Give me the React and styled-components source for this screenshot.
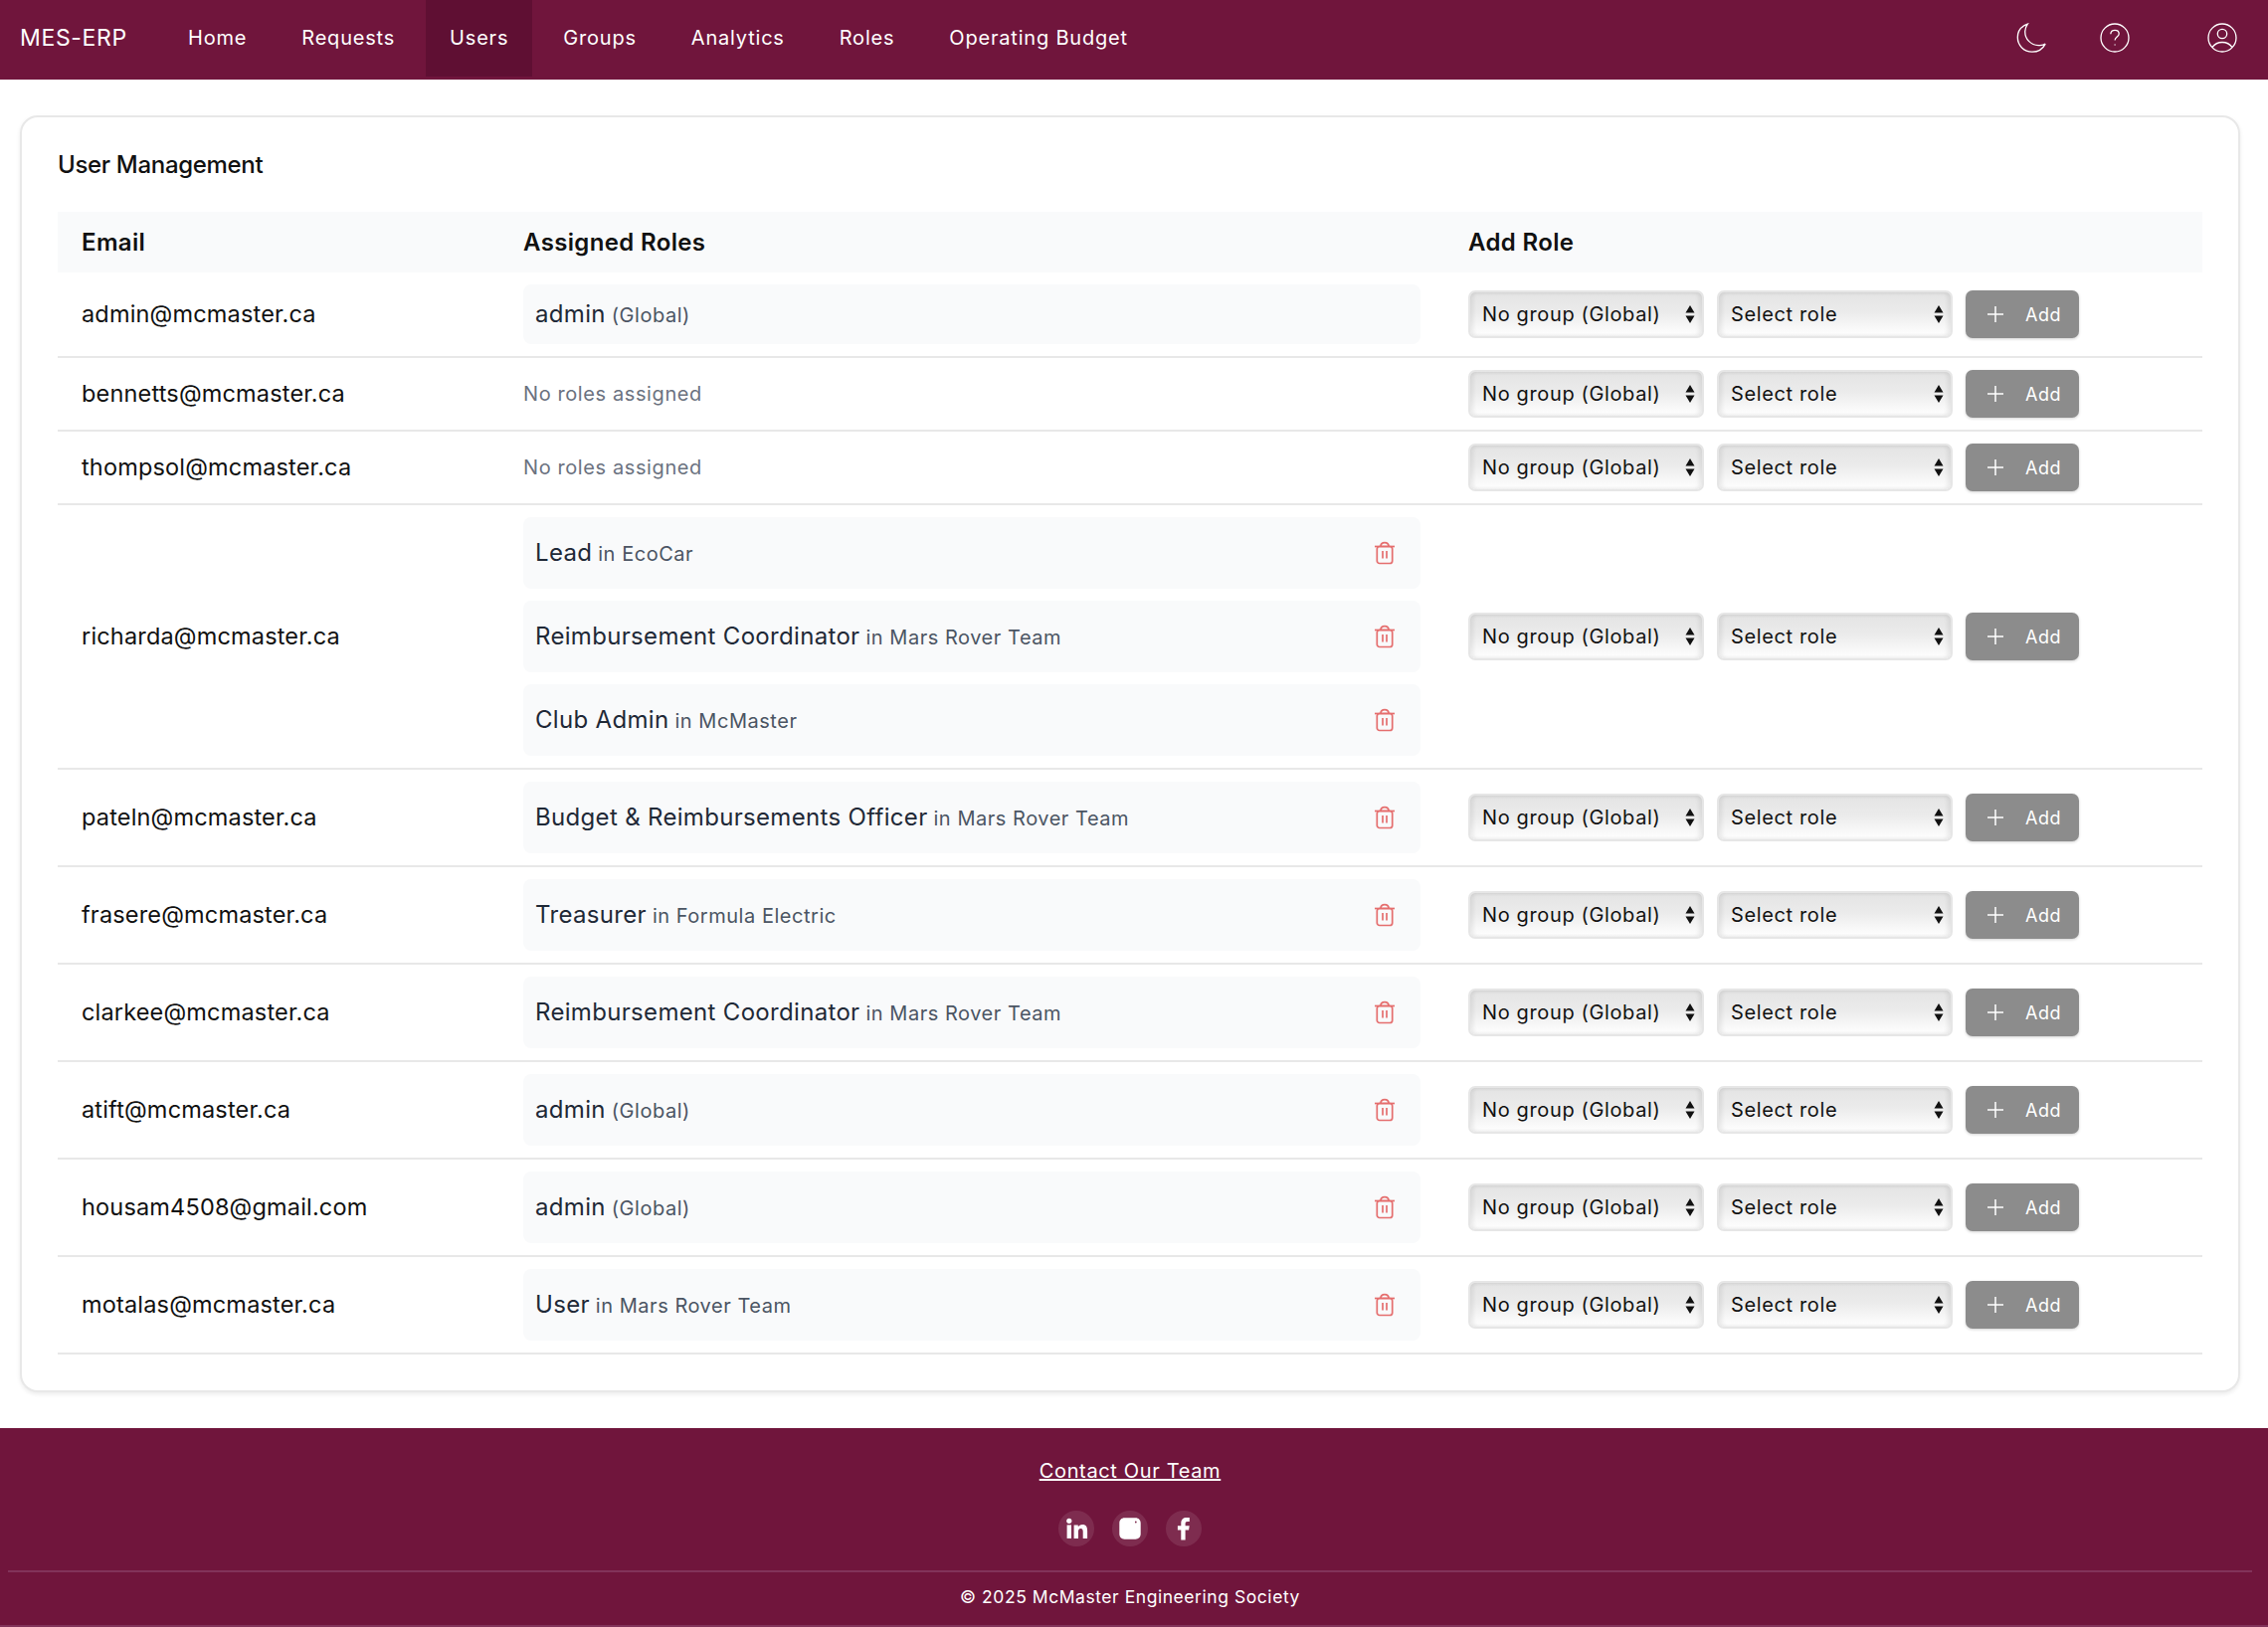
import React from "react";
import styled, { createGlobalStyle } from "styled-components";

const Global = createGlobalStyle`
  html, body { margin: 0; padding: 0; background: #fff; }
  body { font-family: Inter, "Noto Sans", sans-serif; color: #111; -webkit-font-smoothing: antialiased; }
  * { box-sizing: border-box; }
`;

const Page = styled.div`width: 2280px; height: 1636px; display: flex; flex-direction: column; overflow: hidden;`;

const Nav = styled.nav`
  height: 80px; flex: none; background: #70153c; color: #fff; display: flex; align-items: flex-start; padding-left: 20px;
`;
const Brand = styled.div`font-size: 23px; line-height: 76px; letter-spacing: 0.65px; width: 145px; flex: none;`;
const NavItems = styled.div`display: flex; gap: 7px; height: 77px;`;
const NavItem = styled.a`
  padding: 0 24px; font-size: 20px; font-weight: 400; letter-spacing: 0.8px; line-height: 76px; color: #fff;
  background: ${p => (p.$active ? "#5f0f33" : "transparent")};
`;
const NavIcons = styled.div`margin-left: auto; display: flex; align-items: center; height: 76px; padding-right: 31px;`;
const NavIcon = styled.svg`width: 30px; height: 30px; fill: none; stroke: #fff; stroke-width: 1.3; margin-left: ${p => p.$ml}px; display: block;`;

const Main = styled.main`flex: none; padding: 36px 28px 36px 20px; height: 1356px;`;
const Card = styled.section`
  background: #fff; border-radius: 18px; border: 2px solid #e8e8e8; box-shadow: 0 2px 4px rgba(0,0,0,.08);
  padding: 0 36px; height: 1284px;
`;
const Title = styled.h2`margin: 0; font-size: 24px; font-weight: 550; letter-spacing: -0.32px; height: 95px; padding-top: 32px; line-height: 32px; color: #111;`;

const Row = styled.div`
  display: grid; grid-template-columns: 444px 950px 763px; align-items: center;
  border-bottom: 2px solid #e8e8e8;
`;
const HeadRow = styled(Row)`
  background: #f9fafb; border-bottom: 0; height: 61px; font-size: 24px; font-weight: 600; letter-spacing: .35px; color: #111;
`;
const Cell = styled.div`padding: 12px 24px;`;
const Email = styled(Cell)`font-size: 23.500px; letter-spacing: 0.17px; line-height: 28px; color: #111;`;
const RoleCell = styled(Cell)`display: flex; flex-direction: column; gap: 12px;`;
const NoRoles = styled.div`font-size: 20px; letter-spacing: 0.6px; color: #6b7280; `;
const RoleItem = styled.div`
  background: #f9fafb; border-radius: 8px; padding: 0 12px; display: flex; align-items: center; justify-content: space-between;
  height: ${p => (p.$removable ? 72 : 60)}px;
`;
const RoleText = styled.div`font-size: 24px; letter-spacing: 0.32px; line-height: 28px; color: #1f2937;`;
const RoleScope = styled.span`font-size: 20px; letter-spacing: 0.53px; color: #4b5563; margin-left: 6px;`;
const Trash = styled.svg`width: 24px; height: 24px; fill: none; stroke: #e56e6e; stroke-width: 1.7; margin-right: 12px; flex: none;`;

const Controls = styled(Cell)`display: flex; gap: 13px; align-items: center;`;
const SelectWrap = styled.div`position: relative; width: 237px; height: 48px; flex: none;`;
const Select = styled.select`
  appearance: none; width: 100%; height: 100%; margin: 0; padding: 0 30px 0 12px; font-family: inherit; font-size: 20px; letter-spacing: 0.63px; color: #111;
  border: 2px solid #e6e6e6; border-radius: 7px; outline: none;
  background: linear-gradient(#e4e4e4 0%, #ebebeb 45%, #fff 100%);
  box-shadow: inset 3px 0 4px rgba(0,0,0,.07), inset -3px 0 4px rgba(0,0,0,.07);
`;
const Stepper = styled.svg`position: absolute; right: 9px; top: 15px; width: 10px; height: 18px; fill: #111; pointer-events: none;`;
const AddBtn = styled.button`
  width: 114px; height: 48px; flex: none; border: 0; border-radius: 7px; background: #8c8c8c; color: #fff; font-family: inherit;
  font-size: 18px; letter-spacing: 0.5px; display: flex; align-items: center; gap: 21px; padding: 0 0 0 21px; box-shadow: 0 1px 3px rgba(0,0,0,.18);
`;
const Plus = styled.svg`width: 18px; height: 18px; stroke: #fff; stroke-width: 1.5; fill: none; flex: none;`;

const Footer = styled.footer`
  flex: none; height: 200px; background: #70153c; color: #fff; padding: 0 16px 0 8px; border-bottom: 2px solid #82335a; text-align: center;
`;
const Contact = styled.a`display: block; padding-top: 29px; font-size: 20px; line-height: 28px; letter-spacing: .65px; text-decoration: underline; color: #fff;`;
const Socials = styled.div`display: flex; justify-content: center; gap: 18px; margin-top: 26px;`;
const Social = styled.div`width: 36px; height: 36px; border-radius: 50%; background: rgba(255,255,255,.1); display: flex; align-items: center; justify-content: center;`;
const SocialSvg = styled.svg`width: 24px; height: 24px; fill: #fff;`;
const Copy = styled.div`border-top: 2px solid #82335a; margin-top: 24px; padding-top: 12px; font-size: 17.500px; letter-spacing: .55px; line-height: 26px;`;

const MoonIcon = () => (
  <NavIcon $ml={0} viewBox="0 0 30 30"><path d="M11.300 1.200C4.800 3.500 1.300 8.600 1.300 14.600 1.300 23 7.800 29.200 15.900 29.200c5.800 0 10.700-3 13.300-8.100-1.300 1.100-4.600 1.700-7 1.500C14.800 22.400 8.300 16.300 8.800 8.300c.2-2.800 1.200-5.100 2.500-7.100Z"/></NavIcon>
);
const HelpIcon = () => (
  <NavIcon $ml={54} viewBox="0 0 30 30"><circle cx="15" cy="15" r="14"/><path d="M10.800 11.200c.2-2.500 2-3.900 4.300-3.900 2.400 0 4.100 1.500 4.100 3.600 0 3.200-4.100 3.200-4.100 6.700"/><path d="M15.100 21.400v1.100"/></NavIcon>
);
const UserIcon = () => (
  <NavIcon $ml={78} viewBox="0 0 30 30"><circle cx="15" cy="15" r="14"/><circle cx="15" cy="11" r="4.700"/><path d="M5 24.500c2.500-3.500 6-5 10-5s7.500 1.500 10 5"/></NavIcon>
);
const TrashIcon = () => (
  <Trash viewBox="0 0 24 24"><path d="M2 5.500h20"/><path d="M8 5.500C8 3 9.500 1.700 12 1.700S16 3 16 5.500"/><rect x="4.300" y="5.500" width="15.400" height="17" rx="2.500"/><path d="M10 10v7.500M14 10v7.500"/></Trash>
);

const Linkedin = () => (
  <SocialSvg viewBox="0 0 24 24"><circle cx="4.800" cy="4.300" r="2.600"/><rect x="2.600" y="8.400" width="4.400" height="13.500"/><path d="M9.600 8.400h4.200v1.900c.8-1.300 2.300-2.300 4.300-2.300 4 0 5 2.600 5 6.400v7.500h-4.400v-6.700c0-1.800-.4-3.300-2.300-3.300s-2.400 1.500-2.400 3.200v6.800H9.600Z"/></SocialSvg>
);
const Instagram = () => (
  <SocialSvg viewBox="0 0 24 24"><path fillRule="evenodd" d="M6.500 1.300h11c3 0 5.200 2.200 5.200 5.200v11c0 3-2.200 5.200-5.200 5.200h-11c-3 0-5.200-2.200-5.200-5.200v-11c0-3 2.200-5.200 5.200-5.200Zm11.300 3.300a.9.900 0 1 0 0 1.800.9.900 0 0 0 0-1.800Z"/></SocialSvg>
);
const Facebook = () => (
  <SocialSvg viewBox="0 0 24 24"><path d="M9.300 23.600V13.500H5.900V9.200h3.400V6.600C9.300 2.900 11.500.9 14.800.9c1.300 0 2.500.1 3 .2v3.900h-2c-1.800 0-2.200.9-2.200 2.200v2h4.100l-.6 4.300h-3.500v10.100Z"/></SocialSvg>
);

const users = [
  { email: "admin@mcmaster.ca", roles: [{ name: "admin", scope: "(Global)", fixed: true }] },
  { email: "bennetts@mcmaster.ca", roles: [] },
  { email: "thompsol@mcmaster.ca", roles: [] },
  { email: "richarda@mcmaster.ca", roles: [
    { name: "Lead", scope: "in EcoCar" },
    { name: "Reimbursement Coordinator", scope: "in Mars Rover Team" },
    { name: "Club Admin", scope: "in McMaster" },
  ] },
  { email: "pateln@mcmaster.ca", roles: [{ name: "Budget & Reimbursements Officer", scope: "in Mars Rover Team" }] },
  { email: "frasere@mcmaster.ca", roles: [{ name: "Treasurer", scope: "in Formula Electric" }] },
  { email: "clarkee@mcmaster.ca", roles: [{ name: "Reimbursement Coordinator", scope: "in Mars Rover Team" }] },
  { email: "atift@mcmaster.ca", roles: [{ name: "admin", scope: "(Global)" }] },
  { email: "housam4508@gmail.com", roles: [{ name: "admin", scope: "(Global)" }] },
  { email: "motalas@mcmaster.ca", roles: [{ name: "User", scope: "in Mars Rover Team" }] },
];

const navItems = ["Home", "Requests", "Users", "Groups", "Analytics", "Roles", "Operating Budget"];

const PickList = ({ label }) => (
  <SelectWrap>
    <Select defaultValue={label}><option>{label}</option></Select>
    <Stepper viewBox="0 0 10 18"><path d="M5 0 9.500 7.500H.5ZM5 18 .5 10.500h9Z"/></Stepper>
  </SelectWrap>
);

export default function App() {
  return (
    <Page>
      <Global />
      <Nav>
        <Brand>MES-ERP</Brand>
        <NavItems>
          {navItems.map(n => <NavItem key={n} $active={n === "Users"}>{n}</NavItem>)}
        </NavItems>
        <NavIcons><MoonIcon /><HelpIcon /><UserIcon /></NavIcons>
      </Nav>
      <Main>
        <Card>
          <Title>User Management</Title>
          <HeadRow>
            <Cell>Email</Cell><Cell>Assigned Roles</Cell><Cell>Add Role</Cell>
          </HeadRow>
          {users.map(u => (
            <Row key={u.email}>
              <Email>{u.email}</Email>
              <RoleCell>
                {u.roles.length === 0 && <NoRoles>No roles assigned</NoRoles>}
                {u.roles.map(r => (
                  <RoleItem key={r.name} $removable={!r.fixed}>
                    <RoleText>{r.name}<RoleScope>{r.scope}</RoleScope></RoleText>
                    {!r.fixed && <TrashIcon />}
                  </RoleItem>
                ))}
              </RoleCell>
              <Controls>
                <PickList label="No group (Global)" />
                <PickList label="Select role" />
                <AddBtn><Plus viewBox="0 0 18 18"><path d="M9 1v16M1 9h16"/></Plus>Add</AddBtn>
              </Controls>
            </Row>
          ))}
        </Card>
      </Main>
      <Footer>
        <Contact>Contact Our Team</Contact>
        <Socials>
          <Social><Linkedin /></Social>
          <Social><Instagram /></Social>
          <Social><Facebook /></Social>
        </Socials>
        <Copy>© 2025 McMaster Engineering Society</Copy>
      </Footer>
    </Page>
  );
}
